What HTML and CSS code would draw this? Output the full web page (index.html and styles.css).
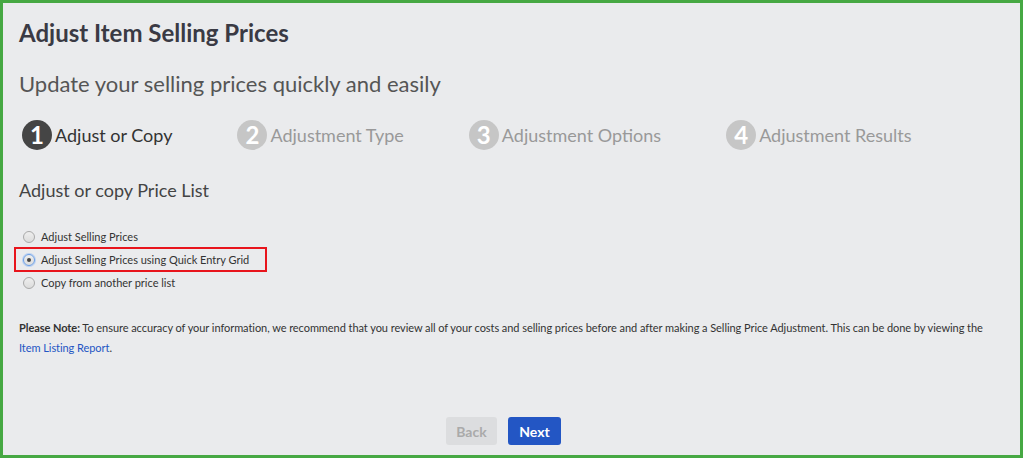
FILE: index.html
```html
<!DOCTYPE html>
<html lang="en">
<head>
  <meta charset="UTF-8">
  <title>Adjust Item Selling Prices</title>
  <link rel="stylesheet" href="styles.css">
</head>
<body>
<div class="page">
  <h1 class="title">Adjust Item Selling Prices</h1>
  <h2 class="subtitle">Update your selling prices quickly and easily</h2>

  <ul class="steps">
    <li class="step active"><span class="num">1</span>Adjust or Copy</li>
    <li class="step"><span class="num">2</span>Adjustment Type</li>
    <li class="step"><span class="num">3</span>Adjustment Options</li>
    <li class="step"><span class="num">4</span>Adjustment Results</li>
  </ul>

  <h3 class="section">Adjust or copy Price List</h3>

  <div class="options">
    <label class="option"><span class="radio"></span>Adjust Selling Prices</label>
    <label class="option marked"><span class="radio checked"></span>Adjust Selling Prices using Quick Entry Grid</label>
    <label class="option"><span class="radio"></span>Copy from another price list</label>
  </div>

  <p class="note">
    <b>Please Note:</b> To ensure accuracy of your information, we recommend that you review all of your costs and selling prices before and after making a Selling Price Adjustment. This can be done by viewing the
    <a href="#">Item Listing Report</a>.
  </p>

  <div class="buttons">
    <button class="btn back">Back</button>
    <button class="btn next">Next</button>
  </div>
</div>
</body>
</html>
```

FILE: styles.css
```css
* {
  margin: 0;
  padding: 0;
  box-sizing: border-box;
}

html, body {
  height: 100%;
}

body {
  font-family: Lato, "Open Sans", sans-serif;
  color: #333;
  background-color: #eaebed;
}

ul {
  list-style: none;
}

.page {
  height: 100%;
  border: 3px solid #46a843;
  padding: 15px 16px 0 16px;
  display: flex;
  flex-direction: column;
}

.title {
  font-size: 24px;
  font-weight: bold;
  line-height: 30px;
  color: #3a3a44;
}

.subtitle {
  margin-top: 21px;
  font-size: 22px;
  font-weight: normal;
  line-height: 30px;
  color: #555;
}

.steps {
  margin-top: 20px;
  display: flex;
  gap: 65px;
  padding-left: 3px;
}

.step {
  display: flex;
  align-items: center;
  height: 32px;
  font-size: 18px;
  color: #999;
}

.step .num {
  width: 30px;
  height: 30px;
  border-radius: 50%;
  background-color: #c6c6c6;
  color: #fff;
  font-size: 24px;
  font-weight: bold;
  line-height: 30px;
  text-align: center;
  margin-right: 3px;
}

.step.active {
  color: #333;
}

.step.active .num {
  background-color: #454545;
}

.section {
  margin-top: 27px;
  font-size: 18px;
  font-weight: normal;
  line-height: 24px;
  color: #444;
}

.options {
  margin-top: 24px;
  display: flex;
  flex-direction: column;
  gap: 2px;
}

.option {
  display: flex;
  align-items: center;
  width: fit-content;
  height: 21px;
  margin-left: -3px;
  padding: 0 16px 0 7px;
  font-size: 11px;
  color: #333;
}

.option.marked {
  outline: 2px solid #e8141c;
}

.radio {
  width: 12px;
  height: 12px;
  margin-right: 6px;
  border-radius: 50%;
  border: 1px solid #a9a9a9;
  background: linear-gradient(#eee, #dcdcdc);
  position: relative;
}

.radio.checked {
  border-color: #6a9ee6;
  box-shadow: 0 0 0 1px #b9d0f2;
}

.radio.checked::after {
  content: "";
  position: absolute;
  left: 3px;
  top: 3px;
  width: 4px;
  height: 4px;
  border-radius: 50%;
  background-color: #444;
}

.note {
  margin-top: 25px;
  font-size: 11px;
  line-height: 20px;
  letter-spacing: -0.06px;
  color: #333;
}

.note a {
  color: #2355c4;
  text-decoration: none;
}

.buttons {
  margin-top: 59px;
  padding-right: 16px;
  display: flex;
  justify-content: center;
  gap: 11px;
}

.btn {
  height: 28px;
  border: none;
  border-radius: 3px;
  font-family: Lato, "Open Sans", sans-serif;
  font-size: 14px;
  font-weight: bold;
}

.btn.back {
  width: 51px;
  background-color: #dcdddf;
  color: #aaa;
}

.btn.next {
  width: 53px;
  background-color: #2356c4;
  color: #fff;
}
```
